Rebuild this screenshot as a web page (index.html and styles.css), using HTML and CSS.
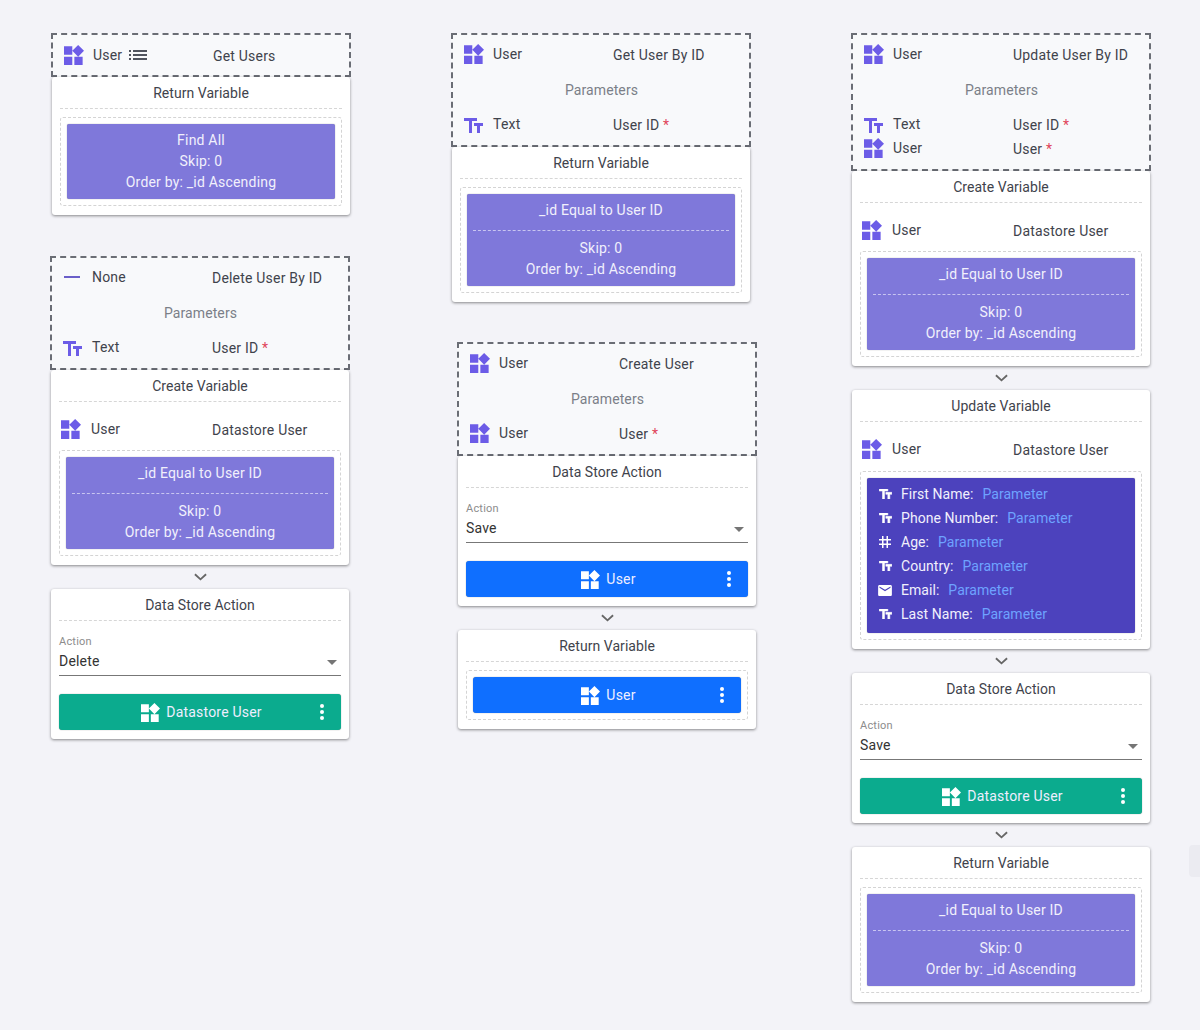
FILE: index.html
```html
<!DOCTYPE html>
<html>
<head>
  <title>Functions</title>
  <link rel="stylesheet" href="styles.css">
</head>
<body>
  <svg class="icon-defs">
    <symbol id="i-widgets" viewBox="3 1.69 19.32 19.31"><path d="M13 13v8h8v-8h-8zM3 21h8v-8H3v8zM3 3v8h8V3H3zm13.66-1.31L11 7.34 16.66 13l5.66-5.66-5.66-5.65z"/></symbol>
    <symbol id="i-text" viewBox="2.5 4 19 15"><path d="M2.5 4v3h5v12h3V7h5V4h-13zm19 5h-9v3h3v7h3v-7h3V9z"/></symbol>
    <symbol id="i-list" viewBox="0 0 24 24"><path d="M3 13h2v-2H3v2zm0 4h2v-2H3v2zm0-8h2V7H3v2zm4 4h14v-2H7v2zm0 4h14v-2H7v2zM7 7v2h14V7H7z"/></symbol>
    <symbol id="i-hash" viewBox="4 4 16 16"><path d="M20 10V8h-4V4h-2v4h-4V4H8v4H4v2h4v4H4v2h4v4h2v-4h4v4h2v-4h4v-2h-4v-4h4zm-6 4h-4v-4h4v4z"/></symbol>
    <symbol id="i-mail" viewBox="2 4 20 16"><path d="M20 4H4c-1.1 0-1.99.9-1.99 2L2 18c0 1.1.9 2 2 2h16c1.1 0 2-.9 2-2V6c0-1.1-.9-2-2-2zm0 4l-8 5-8-5V6l8 5 8-5v2z"/></symbol>
    <symbol id="i-chevron" viewBox="0 0 14 8"><path d="M1 1l6 5.5L13 1" fill="none" stroke="currentColor" stroke-width="2"/></symbol>
  </svg>

  <div class="canvas">

    <!-- first column -->
    <div class="node node-get-users">
      <div class="head">
        <div class="row">
          <div class="type"><svg class="icon"><use href="#i-widgets"/></svg><span>User</span><svg class="icon-list"><use href="#i-list"/></svg></div>
          <div class="name">Get Users</div>
        </div>
      </div>
      <div class="card">
        <div class="title">Return Variable</div>
        <div class="drop">
          <div class="query">
            <div>Find All</div>
            <div>Skip: 0</div>
            <div>Order by: _id Ascending</div>
          </div>
        </div>
      </div>
    </div>

    <div class="node node-delete-user">
      <div class="head">
        <div class="row">
          <div class="type"><span class="icon-none"></span><span>None</span></div>
          <div class="name">Delete User By ID</div>
        </div>
        <div class="params">Parameters</div>
        <div class="row">
          <div class="type"><svg class="icon-text"><use href="#i-text"/></svg><span>Text</span></div>
          <div class="name">User ID <span class="req">*</span></div>
        </div>
      </div>
      <div class="card">
        <div class="title">Create Variable</div>
        <div class="row var-row">
          <div class="type"><svg class="icon"><use href="#i-widgets"/></svg><span>User</span></div>
          <div class="name">Datastore User</div>
        </div>
        <div class="drop">
          <div class="query">
            <div>_id Equal to User ID</div>
            <div class="split"></div>
            <div>Skip: 0</div>
            <div>Order by: _id Ascending</div>
          </div>
        </div>
      </div>
      <div class="next"><svg class="chevron"><use href="#i-chevron"/></svg></div>
      <div class="card">
        <div class="title">Data Store Action</div>
        <div class="field">
          <div class="field-label">Action</div>
          <div class="select">Delete</div>
        </div>
        <div class="pill pill-green"><svg class="icon-pill"><use href="#i-widgets"/></svg><span>Datastore User</span><span class="dots"><i></i><i></i><i></i></span></div>
      </div>
    </div>

    <!-- second column -->
    <div class="node node-get-user">
      <div class="head">
        <div class="row">
          <div class="type"><svg class="icon"><use href="#i-widgets"/></svg><span>User</span></div>
          <div class="name">Get User By ID</div>
        </div>
        <div class="params">Parameters</div>
        <div class="row">
          <div class="type"><svg class="icon-text"><use href="#i-text"/></svg><span>Text</span></div>
          <div class="name">User ID <span class="req">*</span></div>
        </div>
      </div>
      <div class="card">
        <div class="title">Return Variable</div>
        <div class="drop">
          <div class="query">
            <div>_id Equal to User ID</div>
            <div class="split"></div>
            <div>Skip: 0</div>
            <div>Order by: _id Ascending</div>
          </div>
        </div>
      </div>
    </div>

    <div class="node node-create-user">
      <div class="head">
        <div class="row">
          <div class="type"><svg class="icon"><use href="#i-widgets"/></svg><span>User</span></div>
          <div class="name">Create User</div>
        </div>
        <div class="params">Parameters</div>
        <div class="row">
          <div class="type"><svg class="icon"><use href="#i-widgets"/></svg><span>User</span></div>
          <div class="name">User <span class="req">*</span></div>
        </div>
      </div>
      <div class="card">
        <div class="title">Data Store Action</div>
        <div class="field">
          <div class="field-label">Action</div>
          <div class="select">Save</div>
        </div>
        <div class="pill pill-blue"><svg class="icon-pill"><use href="#i-widgets"/></svg><span>User</span><span class="dots"><i></i><i></i><i></i></span></div>
      </div>
      <div class="next"><svg class="chevron"><use href="#i-chevron"/></svg></div>
      <div class="card">
        <div class="title">Return Variable</div>
        <div class="drop">
          <div class="pill pill-blue pill-drop"><svg class="icon-pill"><use href="#i-widgets"/></svg><span>User</span><span class="dots"><i></i><i></i><i></i></span></div>
        </div>
      </div>
    </div>

    <!-- third column -->
    <div class="node node-update-user">
      <div class="head">
        <div class="row">
          <div class="type"><svg class="icon"><use href="#i-widgets"/></svg><span>User</span></div>
          <div class="name">Update User By ID</div>
        </div>
        <div class="params">Parameters</div>
        <div class="row">
          <div class="type"><svg class="icon-text"><use href="#i-text"/></svg><span>Text</span></div>
          <div class="name">User ID <span class="req">*</span></div>
        </div>
        <div class="row">
          <div class="type"><svg class="icon"><use href="#i-widgets"/></svg><span>User</span></div>
          <div class="name">User <span class="req">*</span></div>
        </div>
      </div>
      <div class="card">
        <div class="title">Create Variable</div>
        <div class="row var-row">
          <div class="type"><svg class="icon"><use href="#i-widgets"/></svg><span>User</span></div>
          <div class="name">Datastore User</div>
        </div>
        <div class="drop">
          <div class="query">
            <div>_id Equal to User ID</div>
            <div class="split"></div>
            <div>Skip: 0</div>
            <div>Order by: _id Ascending</div>
          </div>
        </div>
      </div>
      <div class="next"><svg class="chevron"><use href="#i-chevron"/></svg></div>
      <div class="card">
        <div class="title">Update Variable</div>
        <div class="row var-row">
          <div class="type"><svg class="icon"><use href="#i-widgets"/></svg><span>User</span></div>
          <div class="name">Datastore User</div>
        </div>
        <div class="drop drop-assign">
          <div class="assign">
            <div class="assign-row"><span class="assign-icon"><svg class="icon-small-text"><use href="#i-text"/></svg></span><span>First Name:</span><span class="value">Parameter</span></div>
            <div class="assign-row"><span class="assign-icon"><svg class="icon-small-text"><use href="#i-text"/></svg></span><span>Phone Number:</span><span class="value">Parameter</span></div>
            <div class="assign-row"><span class="assign-icon"><svg class="icon-hash"><use href="#i-hash"/></svg></span><span>Age:</span><span class="value">Parameter</span></div>
            <div class="assign-row"><span class="assign-icon"><svg class="icon-small-text"><use href="#i-text"/></svg></span><span>Country:</span><span class="value">Parameter</span></div>
            <div class="assign-row"><span class="assign-icon"><svg class="icon-mail"><use href="#i-mail"/></svg></span><span>Email:</span><span class="value">Parameter</span></div>
            <div class="assign-row"><span class="assign-icon"><svg class="icon-small-text"><use href="#i-text"/></svg></span><span>Last Name:</span><span class="value">Parameter</span></div>
          </div>
        </div>
      </div>
      <div class="next"><svg class="chevron"><use href="#i-chevron"/></svg></div>
      <div class="card">
        <div class="title">Data Store Action</div>
        <div class="field">
          <div class="field-label">Action</div>
          <div class="select">Save</div>
        </div>
        <div class="pill pill-green"><svg class="icon-pill"><use href="#i-widgets"/></svg><span>Datastore User</span><span class="dots"><i></i><i></i><i></i></span></div>
      </div>
      <div class="next"><svg class="chevron"><use href="#i-chevron"/></svg></div>
      <div class="card">
        <div class="title">Return Variable</div>
        <div class="drop">
          <div class="query">
            <div>_id Equal to User ID</div>
            <div class="split"></div>
            <div>Skip: 0</div>
            <div>Order by: _id Ascending</div>
          </div>
        </div>
      </div>
    </div>

    <div class="side-handle"></div>
  </div>
</body>
</html>
```

FILE: styles.css
```css
* {
  box-sizing: border-box;
}

html, body {
  margin: 0;
  padding: 0;
  height: 100%;
  overflow: hidden;
}

body {
  background-color: #f3f3f8;
  color: #3f434c;
  font-family: "Roboto", "Liberation Sans", sans-serif;
  font-size: 14px;
  letter-spacing: 0.2px;
}

.icon-defs {
  display: none;
}

.canvas {
  position: relative;
  width: 1200px;
  height: 1030px;
}

/* function nodes sit freely on the canvas */
.node {
  position: absolute;
  width: 300px;
}

.node-get-users { left: 51px; top: 33px; }
.node-delete-user { left: 50px; top: 256px; }
.node-get-user { left: 451px; top: 33px; }
.node-create-user { left: 457px; top: 342px; }
.node-update-user { left: 851px; top: 33px; }

.side-handle {
  position: absolute;
  right: 0;
  top: 845px;
  width: 11px;
  height: 32px;
  background-color: #ebebf1;
  border-radius: 4px 0 0 4px;
}

.head {
  padding: 8px 8px 8px 11px;
  background-color: #f8f9fb;
  border: 2px dashed #6a6d75;
}

.row {
  display: grid;
  grid-template-columns: 149px 1fr;
  height: 24px;
  align-items: center;
}

.type {
  display: flex;
  align-items: center;
  gap: 9px;
  padding-bottom: 2px;
}

.icon {
  width: 20px;
  height: 20px;
  fill: #6c5ce7;
  flex: none;
}

.icon-text {
  width: 19px;
  height: 15px;
  margin: 2px 1px 0 0;
  fill: #6c5ce7;
  flex: none;
}

.icon-list {
  width: 24px;
  height: 24px;
  margin-left: -5px;
  fill: #50545e;
  flex: none;
}

.icon-none {
  width: 16px;
  height: 2px;
  margin: 0 3px 0 1px;
  background-color: #6a5fc9;
  flex: none;
}

.name {
  white-space: nowrap;
}

.req {
  color: #e0455a;
}

.params {
  margin: 11px 0 11px -2px;
  line-height: 24px;
  text-align: center;
  letter-spacing: 0.1px;
  color: #7b7f88;
}

.card {
  margin: 0 1px;
  padding: 0 8px 9px;
  background-color: #fff;
  border-radius: 3px;
  box-shadow: 0 1px 3px rgba(0, 0, 0, 0.45);
}

.title {
  height: 32px;
  line-height: 32px;
  text-align: center;
  letter-spacing: 0.05px;
  border-bottom: 1px dashed #d6d6d6;
}

.var-row {
  margin-top: 16px;
  padding-left: 2px;
  grid-template-columns: 151px 1fr;
}

.var-row .type {
  gap: 10px;
}

.drop {
  margin-top: 8px;
  padding: 6px;
  border: 1px dashed #d4d4d4;
  border-radius: 3px;
}

.drop-assign {
  margin-top: 9px;
}

.query {
  padding: 6px;
  line-height: 21px;
  text-align: center;
  color: #f1f0fc;
  background-color: #7f78da;
  border-radius: 2px;
  box-shadow: 0 0 1px rgba(0, 0, 0, 0.5);
}

.split {
  margin: 9px 0 7px;
  border-top: 1px dashed #c8c5f0;
}

.assign {
  padding: 4px 11px 7px;
  letter-spacing: 0.05px;
  color: #f1f0fc;
  background-color: #4c42bd;
  border-radius: 2px;
  box-shadow: 0 0 1px rgba(0, 0, 0, 0.5);
}

.assign-row {
  display: flex;
  align-items: center;
  height: 24px;
}

.assign-icon {
  display: flex;
  align-items: center;
  justify-content: center;
  width: 14px;
  margin-right: 9px;
}

.icon-small-text {
  width: 13px;
  height: 10px;
  fill: #fff;
  stroke: #fff;
  stroke-width: 0.8;
}

.icon-hash {
  width: 12px;
  height: 12px;
  fill: #fff;
}

.icon-mail {
  width: 15px;
  height: 11px;
  fill: #fff;
}

.value {
  margin-left: 9px;
  color: #6ea2ff;
}

.field {
  margin-top: 14px;
}

.field-label {
  height: 14px;
  line-height: 14px;
  font-size: 11px;
  color: #8c8c8c;
}

.select {
  position: relative;
  height: 27px;
  padding-top: 2px;
  line-height: 20px;
  color: #333;
  border-bottom: 1px solid #777;
}

.select::after {
  content: "";
  position: absolute;
  right: 4px;
  top: 11px;
  border-left: 5px solid transparent;
  border-right: 5px solid transparent;
  border-top: 5px solid #757575;
}

.pill {
  position: relative;
  display: flex;
  align-items: center;
  justify-content: center;
  gap: 6px;
  height: 36px;
  margin-top: 18px;
  padding-left: 3px;
  color: #eef;
  border-radius: 3px;
  box-shadow: 0 0 1px rgba(0, 0, 0, 0.5);
}

.pill-green {
  background-color: #0bab8e;
}

.pill-blue {
  background-color: #0f6fff;
}

.pill-drop {
  margin-top: 0;
}

.icon-pill {
  width: 19px;
  height: 19px;
  fill: #fff;
  flex: none;
}

.dots {
  position: absolute;
  right: 17px;
  top: 10px;
  display: flex;
  flex-direction: column;
  gap: 2px;
}

.dots i {
  display: block;
  width: 4px;
  height: 4px;
  background-color: #fff;
  border-radius: 50%;
}

.next {
  display: flex;
  align-items: center;
  justify-content: center;
  height: 24px;
}

.chevron {
  width: 13px;
  height: 8px;
  color: #666;
}
```
